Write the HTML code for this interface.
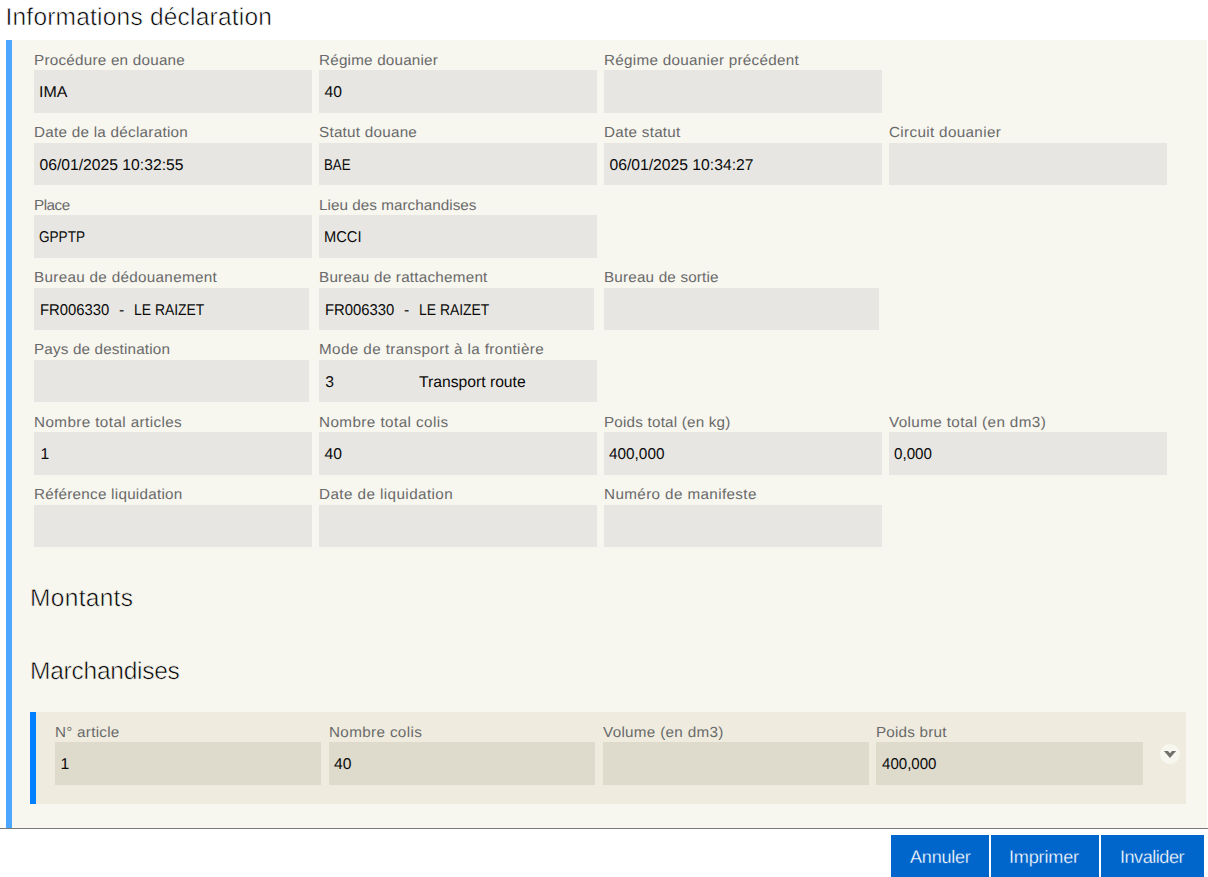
<!DOCTYPE html>
<html lang="fr"><head><meta charset="utf-8"><title>Informations déclaration</title>
<style>
html,body{margin:0;padding:0;background:#fff;}
body{width:1208px;height:877px;position:relative;overflow:hidden;font-family:"Liberation Sans",sans-serif;text-rendering:geometricPrecision;}
.abs,.lab,.box,.h,.btn,.val,.btn span{position:absolute;box-sizing:border-box;white-space:nowrap;}
.h{font-size:24.5px;color:#000;line-height:30px;-webkit-text-stroke:.55px #f7f6ef;}
.lab{font-size:14.6px;color:#6a6a6a;line-height:20px;height:20px;transform:scaleX(1.045);transform-origin:0 50%;}
.box{background:#e7e6e2;}
.box2{background:#dedbcd;}
.val{font-size:15.7px;color:#0a0a0a;line-height:20px;height:20px;transform-origin:0 50%;}
.btn{top:835px;height:42px;background:#0066cc;color:#fff;font-size:18.1px;}
.btn span{line-height:24px;-webkit-text-stroke:.3px #0066cc;}
</style></head><body>
<div class="h" style="left:5.5px;top:2.50px;letter-spacing:0.214px;-webkit-text-stroke-color:#fff">Informations déclaration</div>
<div class="abs" style="left:6px;top:40px;width:1201px;height:788px;background:#f7f6ef;border-left:6px solid #4da6ff"></div>
<div class="lab" style="left:33.7px;top:51.00px;letter-spacing:0.219px">Procédure en douane</div>
<div class="box" style="left:34px;top:70px;width:278px;height:43px"></div>
<div class="val" style="left:39.2px;top:82.50px;transform:scaleX(1.0175);">IMA</div>
<div class="lab" style="left:318.7px;top:51.00px;letter-spacing:0.185px">Régime douanier</div>
<div class="box" style="left:319px;top:70px;width:278px;height:43px"></div>
<div class="val" style="left:324.5px;top:82.50px;">40</div>
<div class="lab" style="left:603.7px;top:51.00px;letter-spacing:0.262px">Régime douanier précédent</div>
<div class="box" style="left:604px;top:70px;width:278px;height:43px"></div>
<div class="lab" style="left:33.7px;top:123.00px;letter-spacing:0.248px">Date de la déclaration</div>
<div class="box" style="left:34px;top:143px;width:278px;height:42px"></div>
<div class="val" style="left:39.5px;top:155.50px;">06/01/2025 10:32:55</div>
<div class="lab" style="left:318.7px;top:123.00px;letter-spacing:0.228px">Statut douane</div>
<div class="box" style="left:319px;top:143px;width:278px;height:42px"></div>
<div class="val" style="left:323.9px;top:155.50px;transform:scaleX(0.8435);">BAE</div>
<div class="lab" style="left:603.7px;top:123.00px;letter-spacing:0.248px">Date statut</div>
<div class="box" style="left:604px;top:143px;width:278px;height:42px"></div>
<div class="val" style="left:609.5px;top:155.50px;">06/01/2025 10:34:27</div>
<div class="lab" style="left:888.7px;top:123.00px;letter-spacing:0.318px">Circuit douanier</div>
<div class="box" style="left:889px;top:143px;width:278px;height:42px"></div>
<div class="lab" style="left:33.7px;top:196.00px;letter-spacing:-0.461px">Place</div>
<div class="box" style="left:34px;top:215px;width:278px;height:43px"></div>
<div class="val" style="left:39.0px;top:227.50px;transform:scaleX(0.8643);">GPPTP</div>
<div class="lab" style="left:318.7px;top:196.00px;letter-spacing:0.028px">Lieu des marchandises</div>
<div class="box" style="left:319px;top:215px;width:278px;height:43px"></div>
<div class="val" style="left:323.6px;top:227.50px;transform:scaleX(0.9348);">MCCI</div>
<div class="lab" style="left:33.7px;top:268.00px;letter-spacing:0.291px">Bureau de dédouanement</div>
<div class="box" style="left:34px;top:288px;width:275px;height:42px"></div>
<div class="lab" style="left:318.7px;top:268.00px;letter-spacing:0.214px">Bureau de rattachement</div>
<div class="box" style="left:319px;top:288px;width:275px;height:42px"></div>
<div class="lab" style="left:603.7px;top:268.00px;letter-spacing:0.169px">Bureau de sortie</div>
<div class="box" style="left:604px;top:288px;width:275px;height:42px"></div>
<div class="lab" style="left:33.7px;top:340.00px;letter-spacing:0.147px">Pays de destination</div>
<div class="box" style="left:34px;top:360px;width:275px;height:42px"></div>
<div class="lab" style="left:318.7px;top:340.00px;letter-spacing:0.368px">Mode de transport à la frontière</div>
<div class="box" style="left:319px;top:360px;width:278px;height:42px"></div>
<div class="val" style="left:325.2px;top:372.50px;">3</div>
<div class="lab" style="left:33.7px;top:413.00px;letter-spacing:0.378px">Nombre total articles</div>
<div class="box" style="left:34px;top:432px;width:278px;height:43px"></div>
<div class="val" style="left:40.5px;top:444.50px;">1</div>
<div class="lab" style="left:318.7px;top:413.00px;letter-spacing:0.404px">Nombre total colis</div>
<div class="box" style="left:319px;top:432px;width:278px;height:43px"></div>
<div class="val" style="left:324.5px;top:444.50px;">40</div>
<div class="lab" style="left:603.7px;top:413.00px;letter-spacing:0.183px">Poids total (en kg)</div>
<div class="box" style="left:604px;top:432px;width:278px;height:43px"></div>
<div class="val" style="left:609px;top:444.50px;transform:scaleX(0.9779);">400,000</div>
<div class="lab" style="left:888.7px;top:413.00px;letter-spacing:0.361px">Volume total (en dm3)</div>
<div class="box" style="left:889px;top:432px;width:278px;height:43px"></div>
<div class="val" style="left:894px;top:444.50px;transform:scaleX(0.9672);">0,000</div>
<div class="lab" style="left:33.7px;top:485.00px;letter-spacing:0.241px">Référence liquidation</div>
<div class="box" style="left:34px;top:505px;width:278px;height:42px"></div>
<div class="lab" style="left:318.7px;top:485.00px;letter-spacing:0.394px">Date de liquidation</div>
<div class="box" style="left:319px;top:505px;width:278px;height:42px"></div>
<div class="lab" style="left:603.7px;top:485.00px;letter-spacing:0.354px">Numéro de manifeste</div>
<div class="box" style="left:604px;top:505px;width:278px;height:42px"></div>
<div class="val" style="left:419px;top:372.50px;">Transport route</div>
<div class="val" style="left:40.0px;top:300.50px;transform:scaleX(0.9465);">FR006330</div>
<div class="val" style="left:119.0px;top:300.50px;">-</div>
<div class="val" style="left:134.2px;top:300.50px;transform:scaleX(0.8867);">LE RAIZET</div>
<div class="val" style="left:325.0px;top:300.50px;transform:scaleX(0.9465);">FR006330</div>
<div class="val" style="left:404.0px;top:300.50px;">-</div>
<div class="val" style="left:419.2px;top:300.50px;transform:scaleX(0.8867);">LE RAIZET</div>
<div class="h" style="left:30.1px;top:583.50px;letter-spacing:0.296px;-webkit-text-stroke-color:#f7f6ef">Montants</div>
<div class="h" style="left:30.1px;top:656.50px;letter-spacing:-0.254px;-webkit-text-stroke-color:#f7f6ef">Marchandises</div>
<div class="abs" style="left:30px;top:712px;width:1156px;height:92px;background:#efecdf;border-left:6px solid #0080ff"></div>
<div class="lab" style="left:54.7px;top:723.00px;letter-spacing:0.246px">N° article</div>
<div class="box box2" style="left:55px;top:742px;width:266px;height:43px"></div>
<div class="val" style="left:60.5px;top:754.50px;">1</div>
<div class="lab" style="left:328.7px;top:723.00px;letter-spacing:0.331px">Nombre colis</div>
<div class="box box2" style="left:329px;top:742px;width:266px;height:43px"></div>
<div class="val" style="left:334px;top:754.50px;">40</div>
<div class="lab" style="left:602.7px;top:723.00px;letter-spacing:0.285px">Volume (en dm3)</div>
<div class="box box2" style="left:603px;top:742px;width:266px;height:43px"></div>
<div class="lab" style="left:876.2px;top:723.00px;letter-spacing:0.182px">Poids brut</div>
<div class="box box2" style="left:876px;top:742px;width:267px;height:43px"></div>
<div class="val" style="left:881.5px;top:754.50px;transform:scaleX(0.9603);">400,000</div>
<div class="abs" style="left:1160px;top:744px;width:20px;height:20px;border-radius:50%;background:#f7f6ef"></div>
<svg class="abs" style="left:1160px;top:744px" width="20" height="20" viewBox="0 0 20 20"><path d="M3.9 7.1 L8 7.1 L10 9.3 L12 7.1 L16.1 7.1 L10 13.9 Z" fill="#72726c"/></svg>
<div class="abs" style="left:0;top:828px;width:1208px;height:1px;background:#7a7a7a"></div>
<div class="abs" style="left:0;top:829px;width:1208px;height:48px;background:#fff"></div>
<div class="btn" style="left:891px;width:98px"><span style="left:19.100000000000023px;top:10.00px;letter-spacing:-0.291px">Annuler</span></div>
<div class="btn" style="left:991px;width:108px"><span style="left:18px;top:10.00px;letter-spacing:-0.186px">Imprimer</span></div>
<div class="btn" style="left:1101px;width:103px"><span style="left:19px;top:10.00px;letter-spacing:-0.484px">Invalider</span></div>
</body></html>
